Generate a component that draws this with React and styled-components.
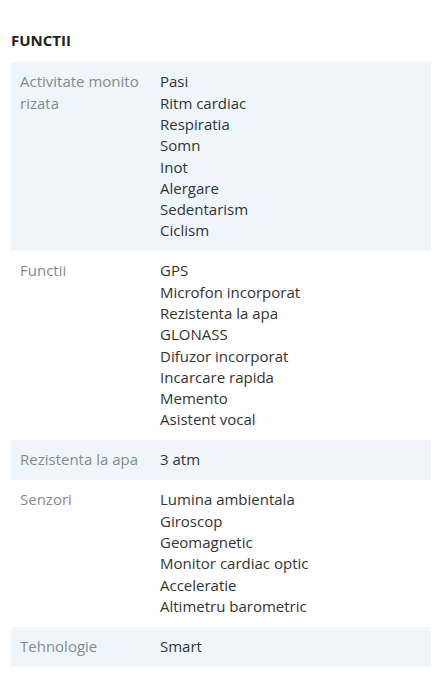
import React from "react";
import styled, { createGlobalStyle } from "styled-components";

const GlobalStyle = createGlobalStyle`
  body {
    margin: 0;
    background: #fff;
    font-family: "Open Sans", "Noto Sans", sans-serif;
  }
`;

const specs = [
  {
    label: "Activitate monitorizata",
    values: ["Pasi", "Ritm cardiac", "Respiratia", "Somn", "Inot", "Alergare", "Sedentarism", "Ciclism"],
  },
  {
    label: "Functii",
    values: [
      "GPS",
      "Microfon incorporat",
      "Rezistenta la apa",
      "GLONASS",
      "Difuzor incorporat",
      "Incarcare rapida",
      "Memento",
      "Asistent vocal",
    ],
  },
  { label: "Rezistenta la apa", values: ["3 atm"] },
  {
    label: "Senzori",
    values: [
      "Lumina ambientala",
      "Giroscop",
      "Geomagnetic",
      "Monitor cardiac optic",
      "Acceleratie",
      "Altimetru barometric",
    ],
  },
  { label: "Tehnologie", values: ["Smart"] },
];

const App = () => (
  <Page>
    <GlobalStyle />
    <Title>FUNCTII</Title>
    <SpecTable>
      {specs.map((row, index) => (
        <SpecRow key={row.label} striped={index % 2 === 0}>
          <Label>{row.label}</Label>
          <Values>
            {row.values.map((value) => (
              <Value key={value}>{value}</Value>
            ))}
          </Values>
        </SpecRow>
      ))}
    </SpecTable>
  </Page>
);

const Page = styled.div`
  padding: 30px 10px 34px 11px;
`;

const Title = styled.h2`
  margin: 0 0 11px;
  font-size: 15px;
  line-height: 21px;
  font-weight: 700;
  color: #222;
`;

const SpecTable = styled.div`
  display: flex;
  flex-direction: column;
`;

const SpecRow = styled.div`
  display: grid;
  grid-template-columns: 140px 1fr;
  background-color: ${(props) => (props.striped ? "#eef6fc" : "#fff")};
  font-size: 15px;
  line-height: 21.3px;
`;

const Label = styled.div`
  padding: 9.35px 9px;
  color: #8a8a8a;
  word-break: break-all;
`;

const Values = styled.div`
  padding: 9.35px 9px;
  color: #333;
`;

const Value = styled.div``;

export default App;
